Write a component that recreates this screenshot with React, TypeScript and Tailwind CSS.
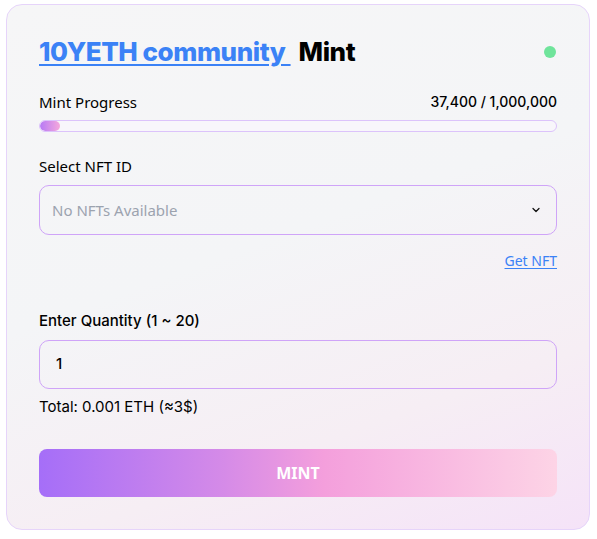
import React from "react";

const poppins = { fontFamily: "Inter, 'Open Sans', sans-serif" };

function Chevron() {
  return (
    <svg width="12" height="12" viewBox="0 0 24 24" fill="none" stroke="#111" strokeWidth="2.5" strokeLinecap="round" strokeLinejoin="round">
      <path d="M6 9l6 6 6-6" />
    </svg>
  );
}

export default function App() {
  return (
    <div className="w-[597px] h-[539px] bg-white pt-[4px] pl-[6px] pr-[7px] font-['Noto_Sans',sans-serif]">
      <div className="h-[526px] rounded-[16px] border border-[#e6d4fa] bg-[linear-gradient(160deg,#f6f6f7_0%,#f4f5f7_45%,#f6eef4_75%,#f5e3f8_100%)] px-8 pt-[28px] text-black">
        {/* heading */}
        <div className="flex items-center justify-between h-[38px]">
          <h1 className="text-[26px] font-extrabold tracking-[-0.45px] leading-none font-['Inter',sans-serif]">
            <a href="#" className="text-[#3b82f6] underline decoration-[2px] underline-offset-[3px]">10YETH community </a>
            <span className="ml-[8px]">Mint</span>
          </h1>
          <span className="mr-[1px] block h-[12px] w-[12px] rounded-full bg-[#6fe49b]" />
        </div>

        {/* progress */}
        <div className="mt-[21px] flex items-center justify-between text-[14px] leading-[20px]">
          <span className="text-[15px]">Mint Progress</span>
          <span className="font-medium font-['Inter',sans-serif]">37,400 / 1,000,000</span>
        </div>
        <div className="mt-[8px] h-[12px] rounded-full border border-[#dcc3fb] bg-[#f8f6fb] overflow-hidden">
          <div className="h-full w-[20px] rounded-full bg-[linear-gradient(90deg,#b77af5,#f5a8dc)]" />
        </div>

        {/* nft select */}
        <div className="mt-[24px] text-[15px] leading-[20px]">Select NFT ID</div>
        <div className="mt-[9px] flex h-[50px] items-center justify-between rounded-[10px] border border-[#cfa4f8] px-[12px]">
          <span className="text-[15px] text-[#9ca3af]">No NFTs Available</span>
          <span className="mr-[2px]"><Chevron /></span>
        </div>
        <div className="mt-[16px] flex justify-end">
          <a href="#" className="text-[14px] leading-[20px] text-[#3b82f6] underline underline-offset-2">Get NFT</a>
        </div>

        {/* quantity */}
        <div className="mt-[40px] text-[15px] leading-[20px] font-medium" style={poppins}>Enter Quantity (1 ~ 20)</div>
        <div className="mt-[9px] flex h-[49px] items-center rounded-[10px] border border-[#cfa4f8] px-[16px]">
          <span className="text-[15px] font-medium" style={poppins}>1</span>
        </div>
        <div className="mt-[8px] text-[15px] leading-[20px]" style={poppins}>Total: 0.001 ETH (≈3$)</div>

        {/* action */}
        <button className="mt-[32px] flex h-[48px] w-full items-center justify-center rounded-[8px] bg-[linear-gradient(90deg,#a56ef8_0%,#d48ae8_35%,#f49fdc_55%,#fdd4e6_100%)] text-[16px] font-bold text-white">
          MINT
        </button>
      </div>
    </div>
  );
}
